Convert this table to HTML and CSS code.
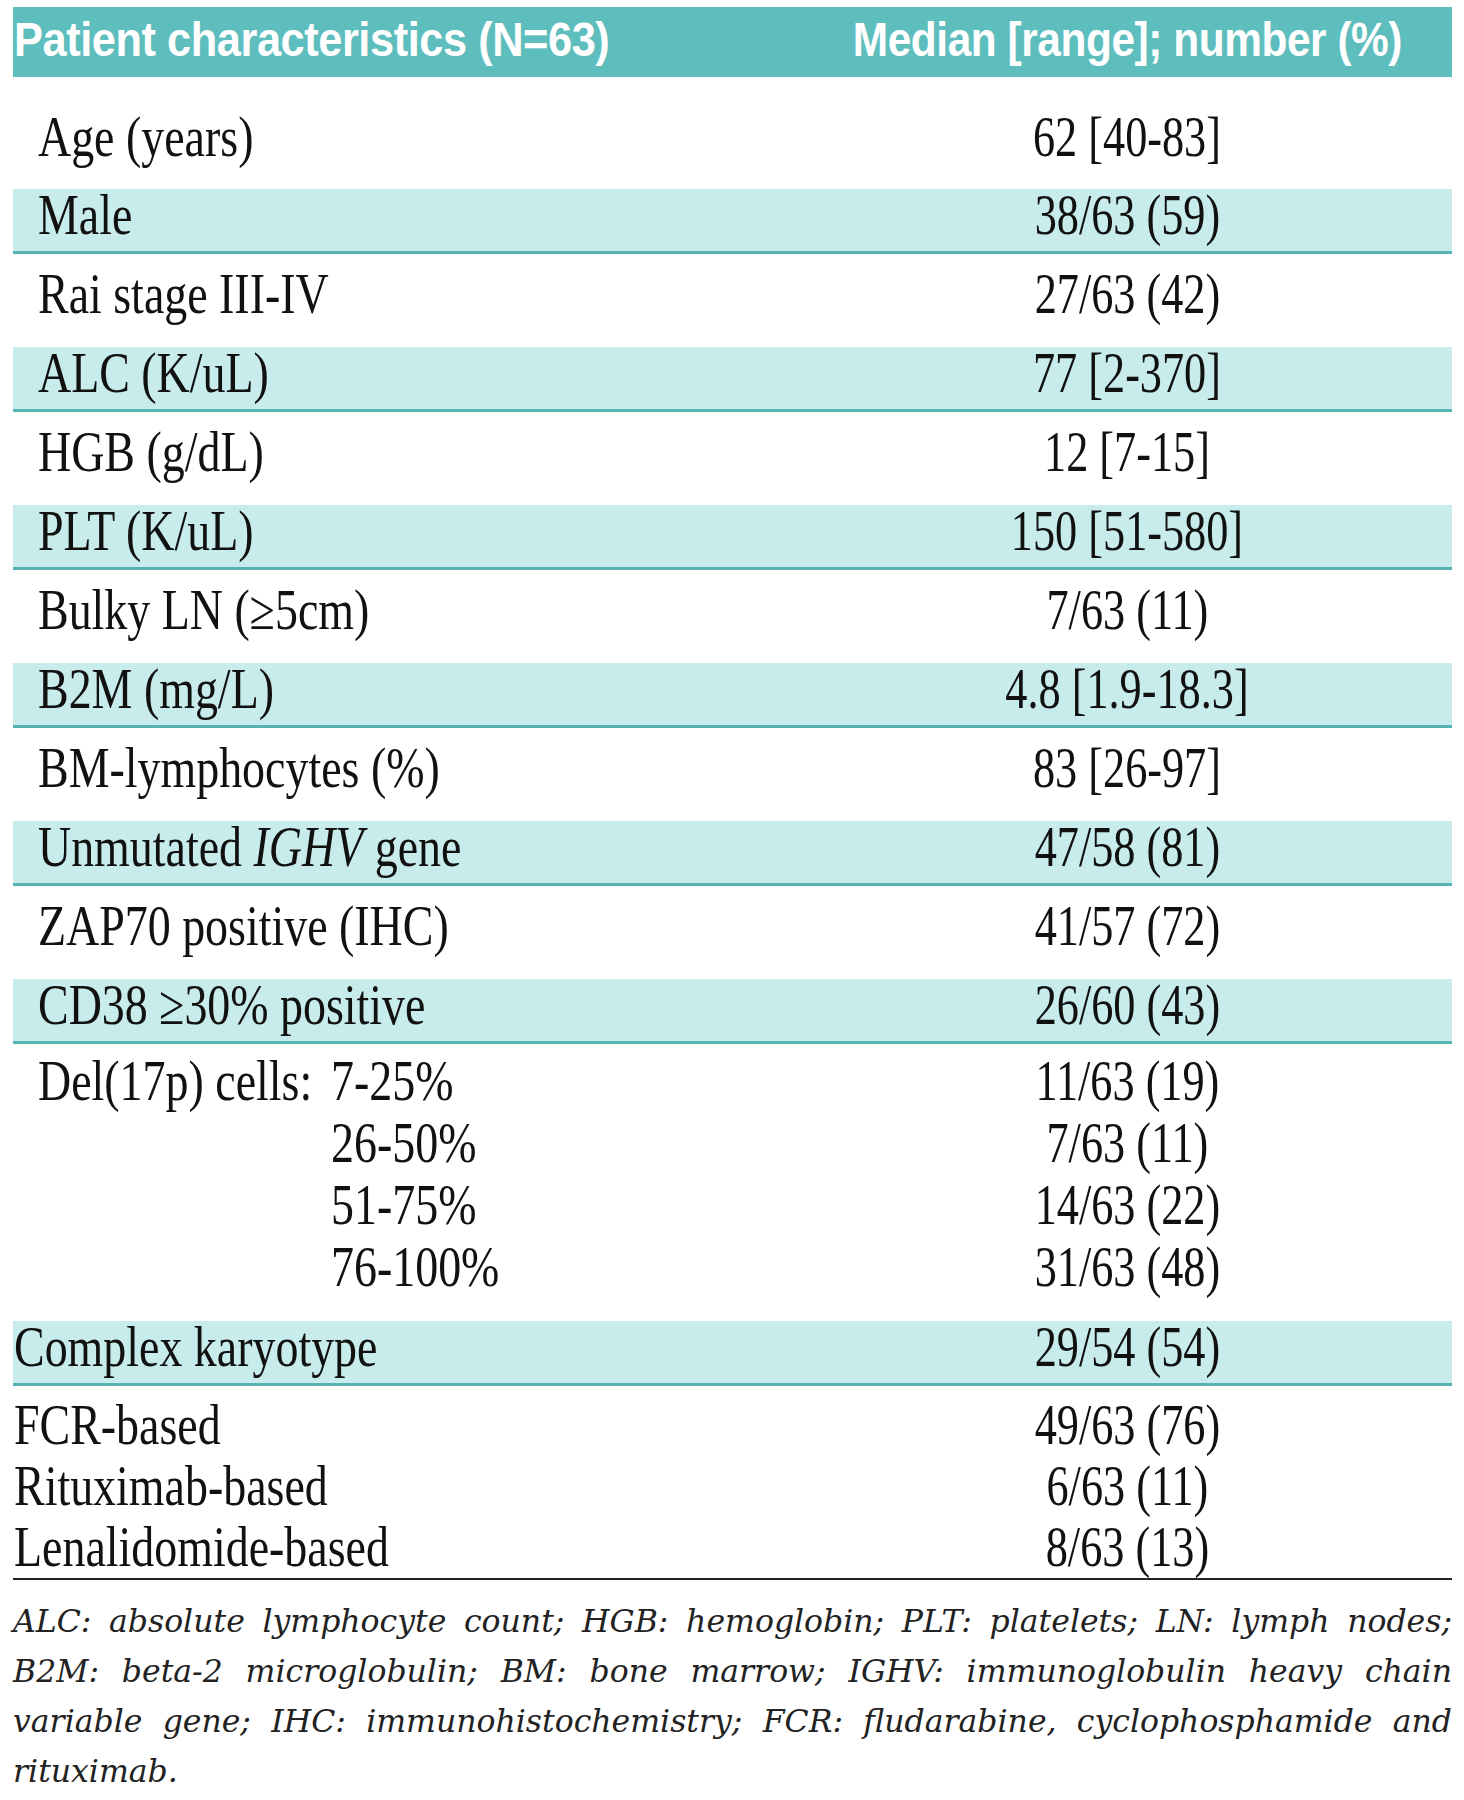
FILE: index.html
```html
<!DOCTYPE html>
<html lang="en">
<head>
<meta charset="utf-8">
<title>Patient characteristics</title>
<link rel="stylesheet" href="styles.css">
</head>
<body>
<div class="page">
  <div class="table">
    <div class="head">
      <div class="h-lab"><span class="hx hx-left">Patient characteristics (N=63)</span></div>
      <div class="h-val"><span class="hx hx-center">Median [range]; number (%)</span></div>
    </div>

    <div class="row first">
      <div class="lab"><span class="tx">Age (years)</span></div>
      <div class="val"><span class="tx">62 [40-83]</span></div>
    </div>
    <div class="row shade">
      <div class="lab"><span class="tx">Male</span></div>
      <div class="val"><span class="tx">38/63 (59)</span></div>
    </div>
    <div class="row plain">
      <div class="lab"><span class="tx">Rai stage III-IV</span></div>
      <div class="val"><span class="tx">27/63 (42)</span></div>
    </div>
    <div class="row shade">
      <div class="lab"><span class="tx">ALC (K/uL)</span></div>
      <div class="val"><span class="tx">77 [2-370]</span></div>
    </div>
    <div class="row plain">
      <div class="lab"><span class="tx">HGB (g/dL)</span></div>
      <div class="val"><span class="tx">12 [7-15]</span></div>
    </div>
    <div class="row shade">
      <div class="lab"><span class="tx">PLT (K/uL)</span></div>
      <div class="val"><span class="tx">150 [51-580]</span></div>
    </div>
    <div class="row plain">
      <div class="lab"><span class="tx">Bulky LN (≥5cm)</span></div>
      <div class="val"><span class="tx">7/63 (11)</span></div>
    </div>
    <div class="row shade">
      <div class="lab"><span class="tx">B2M (mg/L)</span></div>
      <div class="val"><span class="tx">4.8 [1.9-18.3]</span></div>
    </div>
    <div class="row plain">
      <div class="lab"><span class="tx">BM-lymphocytes (%)</span></div>
      <div class="val"><span class="tx">83 [26-97]</span></div>
    </div>
    <div class="row shade">
      <div class="lab"><span class="tx">Unmutated <i>IGHV</i> gene</span></div>
      <div class="val"><span class="tx">47/58 (81)</span></div>
    </div>
    <div class="row plain">
      <div class="lab"><span class="tx">ZAP70 positive (IHC)</span></div>
      <div class="val"><span class="tx">41/57 (72)</span></div>
    </div>
    <div class="row shade">
      <div class="lab"><span class="tx">CD38 ≥30% positive</span></div>
      <div class="val"><span class="tx">26/60 (43)</span></div>
    </div>

    <div class="group del">
      <div class="lab del-lab">
        <div class="del-name"><span class="tx">Del(17p) cells:</span></div>
        <div class="del-ranges">
          <div class="line"><span class="tx">7-25%</span></div>
          <div class="line"><span class="tx">26-50%</span></div>
          <div class="line"><span class="tx">51-75%</span></div>
          <div class="line"><span class="tx">76-100%</span></div>
        </div>
      </div>
      <div class="val">
        <div class="line"><span class="tx">11/63 (19)</span></div>
        <div class="line"><span class="tx">7/63 (11)</span></div>
        <div class="line"><span class="tx">14/63 (22)</span></div>
        <div class="line"><span class="tx">31/63 (48)</span></div>
      </div>
    </div>

    <div class="row shade">
      <div class="lab flush"><span class="tx">Complex karyotype</span></div>
      <div class="val"><span class="tx">29/54 (54)</span></div>
    </div>

    <div class="group treat">
      <div class="row tight">
        <div class="lab flush"><span class="tx">FCR-based</span></div>
        <div class="val"><span class="tx">49/63 (76)</span></div>
      </div>
      <div class="row tight">
        <div class="lab flush"><span class="tx">Rituximab-based</span></div>
        <div class="val"><span class="tx">6/63 (11)</span></div>
      </div>
      <div class="row tight">
        <div class="lab flush"><span class="tx">Lenalidomide-based</span></div>
        <div class="val"><span class="tx">8/63 (13)</span></div>
      </div>
    </div>
  </div>

  <div class="note">
    <span class="nl">ALC: absolute lymphocyte count; HGB: hemoglobin; PLT: platelets; LN: lymph nodes;</span>
    <span class="nl">B2M: beta-2 microglobulin; BM: bone marrow; IGHV: immunoglobulin heavy chain</span>
    <span class="nl">variable gene; IHC: immunohistochemistry; FCR: fludarabine, cyclophosphamide and</span>
    <span class="nl last">rituximab.</span>
  </div>
</div>
</body>
</html>
```

FILE: styles.css
```css
html, body {
  margin: 0;
  padding: 0;
  background: #ffffff;
}

.page {
  padding: 7px 12px 0 13px;
  width: 1439px;
  color: #111111;
  font-family: "Liberation Serif", "Times New Roman", serif;
}

.table {
  width: 1439px;
}

/* header bar */
.head {
  display: grid;
  grid-template-columns: 789px 650px;
  height: 70px;
  background: #5ebebd;
  color: #ffffff;
  font-family: "Liberation Sans", Arial, sans-serif;
  font-weight: bold;
  font-size: 49px;
  line-height: 64px;
  letter-spacing: -0.5px;
}

.h-lab {
  padding-left: 1px;
  white-space: nowrap;
}

.h-val {
  text-align: center;
  white-space: nowrap;
}

.hx {
  display: inline-block;
  white-space: nowrap;
}

.hx-left {
  transform: scaleX(0.885);
  transform-origin: left center;
}

.hx-center {
  transform: scaleX(0.865);
  transform-origin: center center;
}

/* body rows */
.row {
  display: grid;
  grid-template-columns: 789px 650px;
  font-size: 56px;
  box-sizing: border-box;
}

.row.first {
  height: 112px;
  padding-top: 18px;
  line-height: 84px;
}

.row.plain {
  height: 93px;
  line-height: 80px;
}

.row.shade {
  height: 65px;
  line-height: 53px;
  background: #c8ebeb;
  border-bottom: 3px solid #55b4b1;
}

.row.tight {
  height: 61px;
  line-height: 61px;
}

.lab {
  padding-left: 25px;
  white-space: nowrap;
}

.lab.flush {
  padding-left: 1px;
}

.val {
  text-align: center;
  white-space: nowrap;
}

.tx {
  display: inline-block;
  white-space: nowrap;
  transform: scaleX(0.82);
  transform-origin: left center;
}

.val .tx {
  transform: scaleX(0.79);
  transform-origin: center center;
}

/* grouped rows */
.group.del {
  display: grid;
  grid-template-columns: 789px 650px;
  box-sizing: border-box;
  height: 277px;
  padding-top: 6px;
  font-size: 56px;
  line-height: 62px;
}

.del-lab {
  display: flex;
}

.del-name {
  width: 293px;
  flex: none;
}

.line {
  height: 62px;
}

.group.treat {
  box-sizing: border-box;
  height: 194px;
  padding-top: 9px;
  border-bottom: 2px solid #222222;
}

/* footnote */
.note {
  margin-top: 16px;
  font-family: "DejaVu Serif", "Liberation Serif", serif;
  font-style: italic;
  font-size: 31.5px;
  line-height: 50px;
  color: #222222;
}

.nl {
  display: block;
  white-space: nowrap;
  text-align: justify;
  text-align-last: justify;
}

.nl.last {
  text-align: left;
  text-align-last: left;
}
```
